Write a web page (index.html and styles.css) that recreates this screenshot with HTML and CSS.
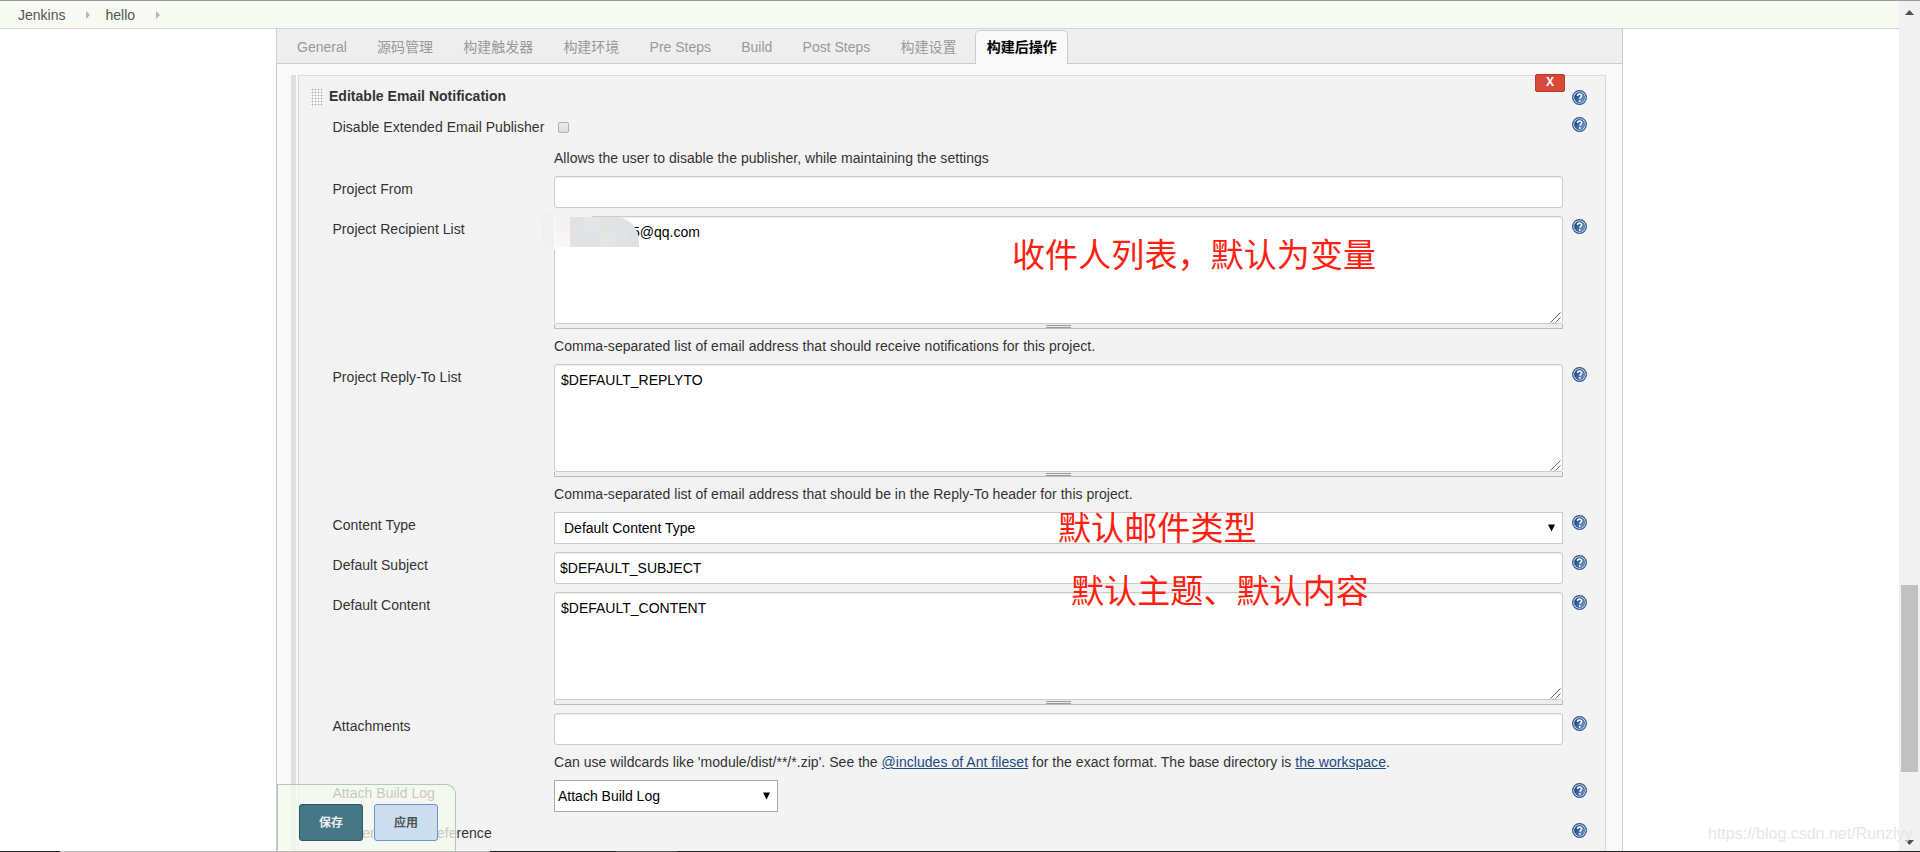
FILE: index.html
```
<!DOCTYPE html>
<html lang="zh">
<head>
  <meta charset="utf-8">
  <title>hello Config [Jenkins]</title>
  <link rel="stylesheet" href="styles.css">
</head>
<body>
  <svg class="defs" width="0" height="0">
    <defs>
      <linearGradient id="blue" x1="0" y1="0" x2="1" y2="0.6">
        <stop offset="0.2" stop-color="#1d4684"/>
        <stop offset="1" stop-color="#7096c8"/>
      </linearGradient>
      <symbol id="help" viewBox="0 0 16 16">
        <circle cx="8" cy="8" r="7.3" fill="#dfe8f4" stroke="#2f5590" stroke-width="1.3"/>
        <circle cx="8" cy="8" r="5.5" fill="url(#blue)" stroke="#31578f" stroke-width="0.6"/>
        <path d="M5.9 6.3C5.9 3.6 10.3 3.7 10.3 6.2C10.3 7.8 8.3 7.8 8.3 9.4" fill="none" stroke="#fff" stroke-width="1.6"/>
        <circle cx="8.3" cy="11.6" r="1" fill="#fff"/>
      </symbol>
    </defs>
  </svg>

  <div class="screen">
    <div class="page">
      <ul id="breadcrumbs">
        <li>Jenkins</li>
        <li class="arrow"></li>
        <li>hello</li>
        <li class="arrow"></li>
      </ul>

      <div class="config">
        <div class="tabBar">
          <div class="tab">General</div>
          <div class="tab">源码管理</div>
          <div class="tab">构建触发器</div>
          <div class="tab">构建环境</div>
          <div class="tab">Pre Steps</div>
          <div class="tab">Build</div>
          <div class="tab">Post Steps</div>
          <div class="tab">构建设置</div>
          <div class="tab active">构建后操作</div>
        </div>

        <div class="repeated">
          <div class="chunk">
            <div class="chunk-head">
              <span class="dd-handle"></span>
              <b>Editable Email Notification</b>
              <button class="delete">X</button>
              <svg class="help"><use href="#help"/></svg>
            </div>

            <div class="row row-check">
              <label>Disable Extended Email Publisher</label>
              <div class="setting"><span class="checkbox"></span></div>
              <svg class="help"><use href="#help"/></svg>
            </div>
            <div class="desc">Allows the user to disable the publisher, while maintaining the settings</div>

            <div class="row">
              <label>Project From</label>
              <div class="setting"><div class="input"></div></div>
            </div>

            <div class="row">
              <label>Project Recipient List</label>
              <div class="setting">
                <div class="textarea recipients">5@qq.com<svg class="resizer" viewBox="0 0 11 11"><path d="M0.5 10.5L10.5 0.5M5.5 10.5L10.5 5.5"/></svg></div>
                <div class="grippie"></div>
                <div class="smudge"></div>
                <div class="mosaic">
                  <i></i><i></i><i></i><i></i><i></i><i></i>
                  <i></i><i></i><i></i><i></i><i></i><i></i>
                </div>
              </div>
              <svg class="help"><use href="#help"/></svg>
            </div>
            <div class="desc">Comma-separated list of email address that should receive notifications for this project.</div>

            <div class="row">
              <label>Project Reply-To List</label>
              <div class="setting">
                <div class="textarea">$DEFAULT_REPLYTO<svg class="resizer" viewBox="0 0 11 11"><path d="M0.5 10.5L10.5 0.5M5.5 10.5L10.5 5.5"/></svg></div>
                <div class="grippie"></div>
              </div>
              <svg class="help"><use href="#help"/></svg>
            </div>
            <div class="desc">Comma-separated list of email address that should be in the Reply-To header for this project.</div>

            <div class="row">
              <label>Content Type</label>
              <div class="setting"><div class="select wide">Default Content Type<svg class="caret" viewBox="0 0 7 8"><path d="M0 0.5H7L3.5 7.5Z"/></svg></div></div>
              <svg class="help"><use href="#help"/></svg>
            </div>

            <div class="row">
              <label>Default Subject</label>
              <div class="setting"><div class="input">$DEFAULT_SUBJECT</div></div>
              <svg class="help"><use href="#help"/></svg>
            </div>

            <div class="row">
              <label>Default Content</label>
              <div class="setting">
                <div class="textarea">$DEFAULT_CONTENT<svg class="resizer" viewBox="0 0 11 11"><path d="M0.5 10.5L10.5 0.5M5.5 10.5L10.5 5.5"/></svg></div>
                <div class="grippie"></div>
              </div>
              <svg class="help"><use href="#help"/></svg>
            </div>

            <div class="row">
              <label>Attachments</label>
              <div class="setting"><div class="input"></div></div>
              <svg class="help"><use href="#help"/></svg>
            </div>
            <div class="desc">Can use wildcards like 'module/dist/**/*.zip'. See the <a href="#">@includes of Ant fileset</a> for the exact format. The base directory is <a href="#">the workspace</a>.</div>

            <div class="row">
              <label>Attach Build Log</label>
              <div class="setting"><div class="select">Attach Build Log<svg class="caret" viewBox="0 0 7 8"><path d="M0 0.5H7L3.5 7.5Z"/></svg></div></div>
              <svg class="help"><use href="#help"/></svg>
            </div>

            <div class="row">
              <label>Content Token Reference</label>
              <div class="setting"></div>
              <svg class="help"><use href="#help"/></svg>
            </div>
          </div>
        </div>
      </div>
    </div>

    <div class="scrollbar">
      <svg class="sb-up" viewBox="0 0 9 5"><path d="M0 5L4.5 0L9 5Z"/></svg>
      <div class="thumb"></div>
      <svg class="sb-down" viewBox="0 0 9 5"><path d="M0 0L4.5 5L9 0Z"/></svg>
    </div>
  </div>

  <!-- sticky save bar -->
  <div class="bottom-sticker">
    <button class="save">保存</button>
    <button class="apply">应用</button>
  </div>

  <!-- notes -->
  <div class="note note-recipients">收件人列表，默认为变量</div>
  <div class="note note-type">默认邮件类型</div>
  <div class="note note-content">默认主题、默认内容</div>

  <div class="watermark">https://blog.csdn.net/Runzlyy</div>
  <div class="edge"></div>
</body>
</html>
```
FILE: styles.css
```
* { box-sizing: border-box; }

body {
  margin: 0;
  height: 852px;
  overflow: hidden;
  position: relative;
  background: #fff;
  color: #333;
  font: 14px/20px "Liberation Sans", "Noto Sans CJK SC", sans-serif;
}

.defs { position: absolute; }

.screen {
  display: flex;
  height: 852px;
  border-top: 1px solid #999;
}

.page {
  flex: 1;
  overflow: hidden;
}

/* breadcrumbs */
#breadcrumbs {
  display: flex;
  align-items: center;
  height: 28px;
  margin: 0;
  padding: 0 0 0 18px;
  list-style: none;
  background: #f6faf2;
  border-bottom: 1px solid #d3d7cf;
  color: #555;
}
.arrow {
  width: 0;
  height: 0;
  margin: 0 15px 0 21px;
  border: 4px solid transparent;
  border-left-color: #b5b5b5;
  border-right-width: 0;
}

/* config panel */
.config {
  width: 1347px;
  margin-left: 276px;
  background: #f9f9f9;
  border: 1px solid #ccc;
  border-width: 0 1px;
}

.tabBar {
  display: flex;
  align-items: flex-end;
  height: 35px;
  padding-left: 8px;
  background: #eee;
  border-bottom: 1px solid #ccc;
}
.tab {
  height: 34px;
  margin-right: 6.2px;
  margin-bottom: -1px;
  padding: 6px 11px 0;
  border: 1px solid transparent;
  border-bottom: 0;
  color: #999;
  white-space: nowrap;
}
.tab.active {
  padding-right: 10px;
  background: #f9f9f9;
  border-color: #ccc;
  border-radius: 5px 5px 0 0;
  color: #000;
  font-weight: bold;
}

.repeated {
  height: 800px;
  margin: 11px 16px 0 14px;
  padding-left: 2px;
  border-left: 5px solid #e0e0e0;
}
.chunk {
  height: 800px;
  background: #f3f3f3;
  border: 1px solid #d9d9d9;
}

.chunk-head {
  display: flex;
  height: 34px;
  padding-left: 12px;
}
.chunk-head b {
  flex: 1;
  margin: 10px 0 0 7px;
  letter-spacing: 0.02px;
}
.dd-handle {
  width: 12px;
  height: 19px;
  margin: 12px -1px 0 0;
  background: #fff radial-gradient(circle at 1.5px 1.5px, #c4c4c4 0.9px, transparent 1.3px) 0 0 / 3px 3px;
}
.delete {
  width: 30px;
  height: 18px;
  margin: -2px 7px 0 0;
  padding: 0 0 2px;
  background: #d64a3b;
  border: 1px solid #c0392b;
  border-radius: 2px;
  color: #fff;
  font: bold 12px/14px "Liberation Sans", sans-serif;
}
.chunk-head .help { margin: 14px 18px 0 0; }

.help {
  width: 15px;
  height: 15px;
}

.row {
  display: grid;
  grid-template-columns: 221.5px 1009px 15px;
  padding: 4px 0 4px 33.5px;
}
.row label {
  padding-top: 3px;
  letter-spacing: 0.03px;
  white-space: nowrap;
}
.row .help {
  margin: 3px 0 0 9px;
}
.row-check { height: 35px; }

.setting { position: relative; }

.desc {
  height: 27px;
  padding: 3px 0 0 255px;
  letter-spacing: 0.03px;
}
.desc a { color: #204a87; }

.checkbox {
  display: block;
  width: 11px;
  height: 11px;
  margin: 8px 0 0 4px;
  background: linear-gradient(#eee, #dcdcdc);
  border: 1px solid #b0b0b0;
  border-radius: 2px;
}

.input,
.textarea,
.select {
  background: #fff;
  border: 1px solid #ccc;
  border-radius: 3px;
  color: #000;
}
.input,
.textarea { box-shadow: inset 0 1px 1px rgba(0, 0, 0, 0.08); }

.input {
  height: 32px;
  padding: 5px;
}
.textarea {
  position: relative;
  height: 108px;
  padding: 5px 6px;
}
.recipients { padding-left: 77px; }
.resizer {
  position: absolute;
  right: 1px;
  bottom: 0;
  width: 11px;
  height: 11px;
  fill: none;
  stroke: #555;
  stroke-width: 0.9;
}

.grippie {
  height: 5px;
  background: #eee linear-gradient(#999 1px, #eee 1px, #eee 2px, #999 2px) 491px 1px / 25px 3px no-repeat;
  border: 1px solid #babdb6;
  border-top: 0;
}

.select {
  display: flex;
  justify-content: space-between;
  align-items: center;
  width: 224px;
  height: 32px;
  padding: 0 7px 0 3px;
  border-color: #a9a9a9;
  border-radius: 0;
}
.select.wide {
  width: auto;
  padding-left: 9px;
  border-color: #ccc;
}
.caret {
  width: 7px;
  height: 8px;
}

/* blurred out part of the address */
.smudge {
  position: absolute;
  top: -4px;
  left: -12px;
  width: 50px;
  height: 38px;
  background: linear-gradient(90deg, #f0f0f0 12px, transparent 12px) 0 0 / 100% 100%, linear-gradient(#f3f3f3 5px, #fefefe 5px);
  border-radius: 12px 0 0 10px;
}
.mosaic {
  position: absolute;
  top: 1px;
  left: 1px;
  display: grid;
  grid-template-columns: repeat(6, 15px);
  grid-template-rows: 15px 15px;
  width: 84px;
  height: 30px;
  overflow: hidden;
  border-radius: 0 24px 0 0;
}
.mosaic i { background: #e1e2e4; }
.mosaic i:nth-child(1) { background: #f5f2f1; }
.mosaic i:nth-child(7) { background: #f9f6f7; }
.mosaic i:nth-child(3) { background: #e4e5e7; }
.mosaic i:nth-child(4) { background: #e1e2e1; }
.mosaic i:nth-child(10) { background: #e5e6e3; }
.mosaic i:nth-child(12) { background: #dfe0e0; }

.scrollbar {
  display: flex;
  flex-direction: column;
  align-items: center;
  width: 21px;
  padding: 9px 0 7px;
  background: #f1f1f1;
  fill: #505050;
}
.sb-up,
.sb-down {
  width: 9px;
  height: 5px;
}
.thumb {
  width: 17px;
  height: 187px;
  margin: 570px 0 auto;
  background: #c1c1c1;
}

.bottom-sticker {
  position: absolute;
  left: 277px;
  bottom: 1px;
  display: flex;
  gap: 11px;
  width: 179px;
  height: 67px;
  padding: 19px 0 0 21px;
  background: rgba(245, 249, 239, 0.75);
  border: 1px solid #a9cdb5;
  border-bottom: 0;
  border-radius: 0 10px 0 0;
}
.bottom-sticker button {
  width: 64px;
  height: 37px;
  padding: 0 0 2px;
  border: 1px solid #6397cf;
  border-radius: 3px;
  font: bold 12px "Noto Sans CJK SC", sans-serif;
}
.bottom-sticker .save {
  background: #457786;
  border-color: #2d5765;
  color: #eee;
}
.bottom-sticker .apply {
  background: #ccdded;
  color: #4d545d;
}

.note {
  position: absolute;
  color: #ff1e0f;
  font: 33px/40px "Noto Sans CJK SC", sans-serif;
  letter-spacing: 0.1px;
  white-space: nowrap;
}
.note-recipients { left: 1012px; top: 233px; }
.note-type { left: 1058px; top: 506px; }
.note-content { left: 1071px; top: 569px; }

.watermark {
  position: absolute;
  left: 1708px;
  top: 824px;
  color: #e6e6e6;
  font-size: 16px;
}

.edge {
  position: absolute;
  left: 0;
  bottom: 0;
  width: 100%;
  height: 1px;
  background: linear-gradient(90deg, #222 60px, #bbb 60px, #bbb 490px, #222 490px, #222 616px, #555 616px, #555 677px, #222 677px);
}
```
